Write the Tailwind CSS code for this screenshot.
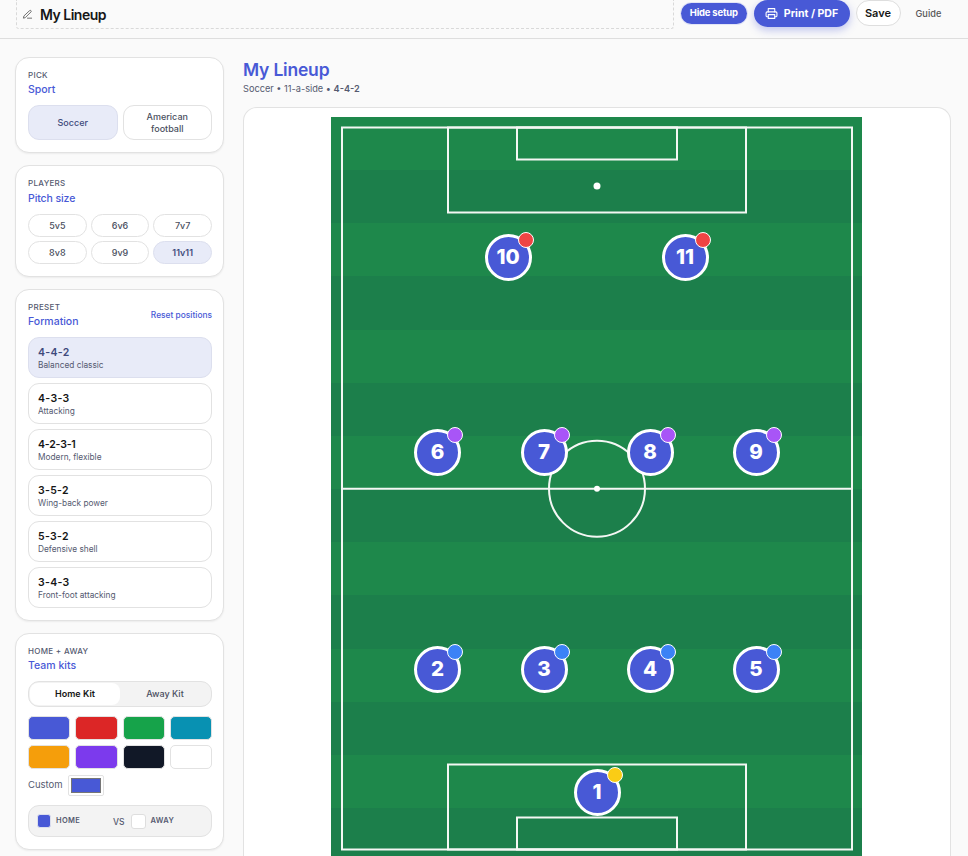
<!DOCTYPE html>
<html lang="en">
<head>
<meta charset="utf-8">
<title>My Lineup</title>
<script src="https://cdn.jsdelivr.net/npm/@tailwindcss/browser@4"></script>
</head>
<body class="h-[856px] overflow-hidden bg-[#fafafa] font-['Inter',sans-serif] text-[#111827]">

<!-- Top bar -->
<header class="h-[39px] border-b border-[#dedede] flex items-start pl-4">
  <div class="w-[658px] shrink-0 h-[29px] border-r border-b border-l border-dashed border-[#d9d9d9] rounded-b-[3px] flex items-center pl-[5px] gap-[7px]">
    <svg class="w-[11px] h-[11px] text-[#666]" viewBox="0 0 24 24" fill="none" stroke="currentColor" stroke-width="2" stroke-linecap="round" stroke-linejoin="round"><path d="M12 20h9"/><path d="M16.5 3.5a2.1 2.1 0 0 1 3 3L7 19l-4 1 1-4z"/></svg>
    <span class="text-[14px] font-semibold tracking-[-0.5px] text-[#161616]">My Lineup</span>
  </div>
  <div class="ml-[7px] h-[27px] flex items-start">
    <button class="mt-[3px] w-[65.5px] h-[21px] rounded-full bg-[#4859d6] text-white text-[9.5px] font-bold tracking-[-0.2px] shadow-[0_0_0_1px_#e2e5f6]">Hide setup</button>
    <button class="ml-[7px] w-[96px] h-[27px] rounded-full bg-[#4859d6] text-white text-[10.6px] font-bold flex items-center justify-center gap-[6px] shadow-[0_3px_8px_rgba(74,90,216,0.35)]">
      <svg class="w-[13px] h-[13px]" viewBox="0 0 24 24" fill="none" stroke="currentColor" stroke-width="2" stroke-linecap="round" stroke-linejoin="round"><path d="M6 9V3h12v6"/><path d="M6 18H4a2 2 0 0 1-2-2v-5a2 2 0 0 1 2-2h16a2 2 0 0 1 2 2v5a2 2 0 0 1-2 2h-2"/><rect x="6" y="14" width="12" height="7"/></svg>
      Print / PDF
    </button>
    <button class="ml-[6px] w-[45px] h-[26px] rounded-full bg-white border border-[#dedede] text-[11px] font-semibold text-[#161616]">Save</button>
    <span class="ml-[15px] mt-[7px] text-[9.2px] font-medium text-[#555]">Guide</span>
  </div>
</header>

<div class="flex pl-[15px] pt-[18px] gap-[19px]">
  <!-- Setup sidebar -->
  <aside class="w-[209px] shrink-0 flex flex-col gap-[12px]">

    <section class="h-[96px] bg-white border border-[#e2e2e2] rounded-[14px] shadow-[0_1px_2px_rgba(0,0,0,0.06)] pl-[12px] pr-[11px] pt-[12px]">
      <p class="text-[8px] leading-[10px] font-medium uppercase tracking-[0.3px] text-[#555a70]">Pick</p>
      <h2 class="text-[10.5px] leading-[14px] mt-[3px] font-medium text-[#4859d6]">Sport</h2>
      <div class="mt-[8px] grid grid-cols-2 gap-[5px]">
        <button class="h-[35px] rounded-[11px] bg-[#e8ebf8] border border-[#dcdfee] text-[9px] font-medium text-[#3f4a7c]">Soccer</button>
        <button class="h-[35px] rounded-[11px] bg-white border border-[#e2e2e2] text-[9px] leading-[12px] font-medium text-[#4a4f60]">American<br>football</button>
      </div>
    </section>

    <section class="h-[112px] bg-white border border-[#e2e2e2] rounded-[14px] shadow-[0_1px_2px_rgba(0,0,0,0.06)] pl-[12px] pr-[11px] pt-[12px]">
      <p class="text-[8px] leading-[10px] font-medium uppercase tracking-[0.3px] text-[#555a70]">Players</p>
      <h2 class="text-[10.5px] leading-[14px] mt-[4px] font-medium tracking-[-0.1px] text-[#4859d6]">Pitch size</h2>
      <div class="mt-[8px] grid grid-cols-3 gap-x-[4px] gap-y-[4px]">
        <button class="h-[23px] rounded-full bg-white border border-[#e2e2e2] text-[9px] font-medium text-[#4a4f60]">5v5</button>
        <button class="h-[23px] rounded-full bg-white border border-[#e2e2e2] text-[9px] font-medium text-[#4a4f60]">6v6</button>
        <button class="h-[23px] rounded-full bg-white border border-[#e2e2e2] text-[9px] font-medium text-[#4a4f60]">7v7</button>
        <button class="h-[23px] rounded-full bg-white border border-[#e2e2e2] text-[9px] font-medium text-[#4a4f60]">8v8</button>
        <button class="h-[23px] rounded-full bg-white border border-[#e2e2e2] text-[9px] font-medium text-[#4a4f60]">9v9</button>
        <button class="h-[23px] rounded-full bg-[#e8ebf8] border border-[#dcdfee] text-[9px] font-semibold text-[#3f4a7c]">11v11</button>
      </div>
    </section>

    <section class="h-[332px] bg-white border border-[#e2e2e2] rounded-[14px] shadow-[0_1px_2px_rgba(0,0,0,0.06)] pl-[12px] pr-[11px] pt-[12px]">
      <div class="flex items-center justify-between">
        <div>
          <p class="text-[8px] leading-[10px] font-medium uppercase tracking-[0.3px] text-[#555a70]">Preset</p>
          <h2 class="text-[10.5px] leading-[14px] mt-[3px] font-medium text-[#4859d6]">Formation</h2>
        </div>
        <button class="text-[8.4px] leading-[10px] mb-[1px] font-medium text-[#4859d6]">Reset positions</button>
      </div>
      <div class="mt-[8px] flex flex-col gap-[5px]">
        <button class="h-[41px] rounded-[11px] bg-[#e8ebf8] border border-[#dcdfee] pl-[9px] pt-[2px] text-left">
          <span class="block text-[10.5px] leading-[13px] font-semibold tracking-[0.3px] text-[#3f4a7c]">4-4-2</span>
          <span class="block text-[8.3px] leading-[12px] text-[#555a70]">Balanced classic</span>
        </button>
        <button class="h-[41px] rounded-[11px] bg-white border border-[#e2e2e2] pl-[9px] pt-[2px] text-left">
          <span class="block text-[10.5px] leading-[13px] font-semibold tracking-[0.3px] text-[#161616]">4-3-3</span>
          <span class="block text-[8.3px] leading-[12px] text-[#555a70]">Attacking</span>
        </button>
        <button class="h-[41px] rounded-[11px] bg-white border border-[#e2e2e2] pl-[9px] pt-[2px] text-left">
          <span class="block text-[10.5px] leading-[13px] font-semibold tracking-[-0.2px] text-[#161616]">4-2-3-1</span>
          <span class="block text-[8.3px] leading-[12px] text-[#555a70]">Modern, flexible</span>
        </button>
        <button class="h-[41px] rounded-[11px] bg-white border border-[#e2e2e2] pl-[9px] pt-[2px] text-left">
          <span class="block text-[10.5px] leading-[13px] font-semibold tracking-[0.3px] text-[#161616]">3-5-2</span>
          <span class="block text-[8.3px] leading-[12px] text-[#555a70]">Wing-back power</span>
        </button>
        <button class="h-[41px] rounded-[11px] bg-white border border-[#e2e2e2] pl-[9px] pt-[2px] text-left">
          <span class="block text-[10.5px] leading-[13px] font-semibold tracking-[0.3px] text-[#161616]">5-3-2</span>
          <span class="block text-[8.3px] leading-[12px] text-[#555a70]">Defensive shell</span>
        </button>
        <button class="h-[41px] rounded-[11px] bg-white border border-[#e2e2e2] pl-[9px] pt-[2px] text-left">
          <span class="block text-[10.5px] leading-[13px] font-semibold tracking-[0.3px] text-[#161616]">3-4-3</span>
          <span class="block text-[8.3px] leading-[12px] text-[#555a70]">Front-foot attacking</span>
        </button>
      </div>
    </section>

    <section class="h-[217px] bg-white border border-[#e2e2e2] rounded-[14px] shadow-[0_1px_2px_rgba(0,0,0,0.06)] pl-[12px] pr-[11px] pt-[12px]">
      <p class="text-[8px] leading-[10px] font-medium uppercase tracking-[0.3px] text-[#555a70]">Home + Away</p>
      <h2 class="text-[10.5px] leading-[14px] mt-[3px] font-medium text-[#4859d6]">Team kits</h2>
      <div class="mt-[8px] h-[26px] rounded-[11px] bg-[#f3f3f3] border border-[#e2e2e2] p-[1px] flex">
        <button class="w-[90px] rounded-[8px] bg-white text-[9px] font-semibold text-[#161616]">Home Kit</button>
        <button class="flex-1 text-[9px] font-medium text-[#4a4f60]">Away Kit</button>
      </div>
      <div class="mt-[9px] grid grid-cols-4 gap-[5px]">
        <div class="h-[24px] rounded-[5px] bg-[#4859d6] border border-[#e2e2e2]"></div>
        <div class="h-[24px] rounded-[5px] bg-[#dc2626] border border-[#e2e2e2]"></div>
        <div class="h-[24px] rounded-[5px] bg-[#16a34a] border border-[#e2e2e2]"></div>
        <div class="h-[24px] rounded-[5px] bg-[#0891b2] border border-[#e2e2e2]"></div>
        <div class="h-[24px] rounded-[5px] bg-[#f59e0b] border border-[#e2e2e2]"></div>
        <div class="h-[24px] rounded-[5px] bg-[#7c3aed] border border-[#e2e2e2]"></div>
        <div class="h-[24px] rounded-[5px] bg-[#111827] border border-[#e2e2e2]"></div>
        <div class="h-[24px] rounded-[5px] bg-white border border-[#e2e2e2]"></div>
      </div>
      <div class="mt-[6px] flex items-center gap-[5px]">
        <span class="text-[9.5px] text-[#555a70]">Custom</span>
        <div class="w-[36px] h-[21px] border border-[#e2e2e2] rounded-[2px] p-[2px]">
          <div class="w-full h-full bg-[#4859d6] border border-[#767676]"></div>
        </div>
      </div>
      <div class="mt-[9px] h-[32px] rounded-[11px] bg-[#f3f3f3] border border-[#e2e2e2] flex items-center pl-[8px]">
        <span class="w-[14px] h-[14px] rounded-[3px] bg-[#4859d6] border border-[#dcdfee]"></span>
        <span class="ml-[5px] w-[57px] text-[7.5px] font-semibold uppercase tracking-[0.3px] text-[#555a70]">Home</span>
        <span class="mt-[2px] text-[8.5px] font-medium text-[#555a70]">VS</span>
        <span class="ml-[6px] w-[15px] h-[15px] rounded-[3px] bg-white border border-[#dedede]"></span>
        <span class="ml-[5px] text-[7.5px] font-semibold uppercase tracking-[0.3px] text-[#555a70]">Away</span>
      </div>
    </section>
  </aside>

  <!-- Lineup sheet -->
  <main class="w-[708px]">
    <h1 class="text-[17.5px] leading-[24px] mt-[1px] font-semibold tracking-[-0.2px] text-[#4859d6]">My Lineup</h1>
    <p class="text-[9.2px] leading-[12px] mt-[1px] text-[#555a70]">Soccer • 11-a-side • <span class="font-semibold">4-4-2</span></p>
    <div class="mt-[12px] h-[749px] overflow-hidden bg-white border border-b-0 border-[#e2e2e2] rounded-t-[14px] pt-[9px] pl-[87px]">
      <div class="relative w-[531px] h-[744px] bg-[repeating-linear-gradient(180deg,#1e884b_0,#1e884b_53.15px,#1c7f4b_53.15px,#1c7f4b_106.3px)]">
        <svg class="absolute inset-0 w-[531px] h-[744px]" viewBox="331 117 531 744" fill="none" stroke="#f4f7f4" stroke-width="2">
          <rect x="342" y="127.5" width="510" height="722"/>
          <rect x="448" y="127.5" width="298" height="85"/>
          <rect x="517" y="127.5" width="160" height="32"/>
          <rect x="448" y="764.5" width="298" height="85"/>
          <rect x="517" y="817.5" width="160" height="32"/>
          <line x1="342" y1="488.7" x2="852" y2="488.7"/>
          <circle cx="597" cy="488.7" r="48"/>
          <circle cx="597" cy="488.7" r="3" fill="#fff" stroke="none"/>
          <circle cx="597" cy="186" r="3.5" fill="#fff" stroke="none"/>
        </svg>

        <!-- players, placed on the pitch -->
        <div class="absolute left-[153.5px] top-[117px] w-[47px] h-[47px] rounded-full bg-[#4859d6] border-[3px] border-white flex items-center justify-center text-white text-[20.5px] font-extrabold">10<span class="absolute -right-[5px] -top-[5px] w-[16px] h-[16px] rounded-full bg-[#ef4444] border-[1.5px] border-white"></span></div>
        <div class="absolute left-[330.5px] top-[117px] w-[47px] h-[47px] rounded-full bg-[#4859d6] border-[3px] border-white flex items-center justify-center text-white text-[20.5px] font-extrabold">11<span class="absolute -right-[5px] -top-[5px] w-[16px] h-[16px] rounded-full bg-[#ef4444] border-[1.5px] border-white"></span></div>

        <div class="absolute left-[83px] top-[312px] w-[47px] h-[47px] rounded-full bg-[#4859d6] border-[3px] border-white flex items-center justify-center text-white text-[20.5px] font-extrabold">6<span class="absolute -right-[5px] -top-[5px] w-[16px] h-[16px] rounded-full bg-[#a855f7] border-[1.5px] border-white"></span></div>
        <div class="absolute left-[189.5px] top-[312px] w-[47px] h-[47px] rounded-full bg-[#4859d6] border-[3px] border-white flex items-center justify-center text-white text-[20.5px] font-extrabold">7<span class="absolute -right-[5px] -top-[5px] w-[16px] h-[16px] rounded-full bg-[#a855f7] border-[1.5px] border-white"></span></div>
        <div class="absolute left-[295.5px] top-[312px] w-[47px] h-[47px] rounded-full bg-[#4859d6] border-[3px] border-white flex items-center justify-center text-white text-[20.5px] font-extrabold">8<span class="absolute -right-[5px] -top-[5px] w-[16px] h-[16px] rounded-full bg-[#a855f7] border-[1.5px] border-white"></span></div>
        <div class="absolute left-[401.5px] top-[312px] w-[47px] h-[47px] rounded-full bg-[#4859d6] border-[3px] border-white flex items-center justify-center text-white text-[20.5px] font-extrabold">9<span class="absolute -right-[5px] -top-[5px] w-[16px] h-[16px] rounded-full bg-[#a855f7] border-[1.5px] border-white"></span></div>

        <div class="absolute left-[83px] top-[529px] w-[47px] h-[47px] rounded-full bg-[#4859d6] border-[3px] border-white flex items-center justify-center text-white text-[20.5px] font-extrabold">2<span class="absolute -right-[5px] -top-[5px] w-[16px] h-[16px] rounded-full bg-[#3b82f6] border-[1.5px] border-white"></span></div>
        <div class="absolute left-[189.5px] top-[529px] w-[47px] h-[47px] rounded-full bg-[#4859d6] border-[3px] border-white flex items-center justify-center text-white text-[20.5px] font-extrabold">3<span class="absolute -right-[5px] -top-[5px] w-[16px] h-[16px] rounded-full bg-[#3b82f6] border-[1.5px] border-white"></span></div>
        <div class="absolute left-[295.5px] top-[529px] w-[47px] h-[47px] rounded-full bg-[#4859d6] border-[3px] border-white flex items-center justify-center text-white text-[20.5px] font-extrabold">4<span class="absolute -right-[5px] -top-[5px] w-[16px] h-[16px] rounded-full bg-[#3b82f6] border-[1.5px] border-white"></span></div>
        <div class="absolute left-[401.5px] top-[529px] w-[47px] h-[47px] rounded-full bg-[#4859d6] border-[3px] border-white flex items-center justify-center text-white text-[20.5px] font-extrabold">5<span class="absolute -right-[5px] -top-[5px] w-[16px] h-[16px] rounded-full bg-[#3b82f6] border-[1.5px] border-white"></span></div>

        <div class="absolute left-[242.5px] top-[652px] w-[47px] h-[47px] rounded-full bg-[#4859d6] border-[3px] border-white flex items-center justify-center text-white text-[20.5px] font-extrabold">1<span class="absolute -right-[5px] -top-[5px] w-[16px] h-[16px] rounded-full bg-[#facc15] border-[1.5px] border-white"></span></div>
      </div>
    </div>
  </main>
</div>
</body>
</html>
